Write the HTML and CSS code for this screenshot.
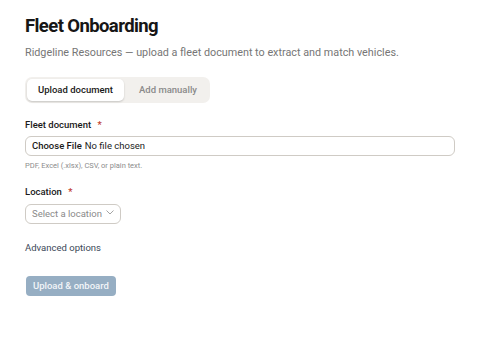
FILE: index.html
```html
<!DOCTYPE html>
<html lang="en">
<head>
  <meta charset="UTF-8" />
  <meta name="viewport" content="width=device-width, initial-scale=1.0"/>
  <title>Fleet Onboarding</title>
  <link rel="stylesheet" href="styles.css">
</head>
<body>
  <div class="page">
    <h1 class="title">Fleet Onboarding</h1>
    <p class="subtitle">Ridgeline Resources — upload a fleet document to extract and match vehicles.</p>

    <div class="tabs">
      <button class="tab active">Upload document</button>
      <button class="tab">Add manually</button>
    </div>

    <div class="field first">
      <label class="label">Fleet document <span class="req">*</span></label>
      <input class="file-input" type="file">
      <div class="hint">PDF, Excel (.xlsx), CSV, or plain text.</div>
    </div>

    <div class="field">
      <label class="label">Location <span class="req">*</span></label>
      <div class="select-wrap">
        <select class="select">
          <option>Select a location</option>
        </select>
        <svg class="chevron" width="8" height="5" viewBox="0 0 8 5">
          <path d="M0.5 0.5 L4 4 L7.5 0.5" fill="none" stroke="#9a9a9a" stroke-width="0.9"/>
        </svg>
      </div>
    </div>

    <div class="advanced">Advanced options</div>

    <button class="submit" disabled>Upload &amp; onboard</button>
  </div>
</body>
</html>
```

FILE: styles.css
```css
body {
  margin: 0;
  background: #fff;
  color: #1a1a1a;
  font-family: Roboto, Arial, sans-serif;
}

.page {
  padding: 12px 25px;
  display: flex;
  flex-direction: column;
  align-items: flex-start;
}

.title {
  margin: 0;
  font-size: 18.5px;
  font-weight: 700;
  line-height: 28px;
  letter-spacing: -0.6px;
  color: #161616;
}

.subtitle {
  margin: 5px 0 0;
  font-size: 10.8px;
  line-height: 16px;
  color: #767676;
}

.tabs {
  margin-top: 16px;
  display: flex;
  gap: 4px;
  padding: 2px;
  background: #f2f0ed;
  border-radius: 7px;
}

.tab {
  border: none;
  background: none;
  font-family: inherit;
  font-size: 9.5px;
  line-height: 12px;
  font-weight: 500;
  color: #8a8a8a;
  padding: 5px 11px;
  border-radius: 5px;
}

.tab.active {
  background: #fff;
  color: #1a1a1a;
  box-shadow: 0 1px 2px rgba(0, 0, 0, 0.18);
}

.field {
  margin-top: 14px;
  display: flex;
  flex-direction: column;
  align-items: flex-start;
  align-self: stretch;
}

.field.first {
  margin-top: 16px;
}

.label {
  font-size: 9.5px;
  line-height: 12px;
  font-weight: 500;
  color: #1a1a1a;
}

.req {
  color: #c0392b;
  margin-left: 4px;
}

.file-input {
  margin-top: 5px;
  align-self: stretch;
  box-sizing: border-box;
  height: 20px;
  border: 1px solid #cfcbc5;
  border-radius: 6px;
  font-family: inherit;
  font-size: 9.5px;
  padding: 3px 6px 0;
  color: #222;
}

.file-input::file-selector-button {
  border: none;
  background: none;
  font-family: inherit;
  font-size: 9.5px;
  font-weight: 500;
  padding: 0;
  margin-right: 3px;
  color: #1a1a1a;
}

.hint {
  margin-top: 4px;
  font-size: 7.5px;
  line-height: 12px;
  color: #8c8c8c;
}

.select-wrap {
  margin-top: 4px;
  position: relative;
}

.select {
  appearance: none;
  box-sizing: border-box;
  height: 20px;
  width: 96px;
  border: 1px solid #cfcbc5;
  border-radius: 6px;
  background: #fff;
  font-family: inherit;
  font-size: 9.5px;
  color: #8a8a8a;
  padding: 0 6px;
}

.chevron {
  position: absolute;
  left: 81px;
  top: 8px;
  pointer-events: none;
}

.advanced {
  margin-top: 18px;
  font-size: 9.5px;
  line-height: 12px;
  color: #3c4858;
}

.submit {
  margin-top: 22px;
  margin-left: 1px;
  box-sizing: border-box;
  height: 20px;
  border: none;
  border-radius: 4px;
  background: #96aec3;
  color: #f2f5f8;
  font-family: inherit;
  font-size: 9.5px;
  font-weight: 500;
  padding: 0 7px;
}
```
